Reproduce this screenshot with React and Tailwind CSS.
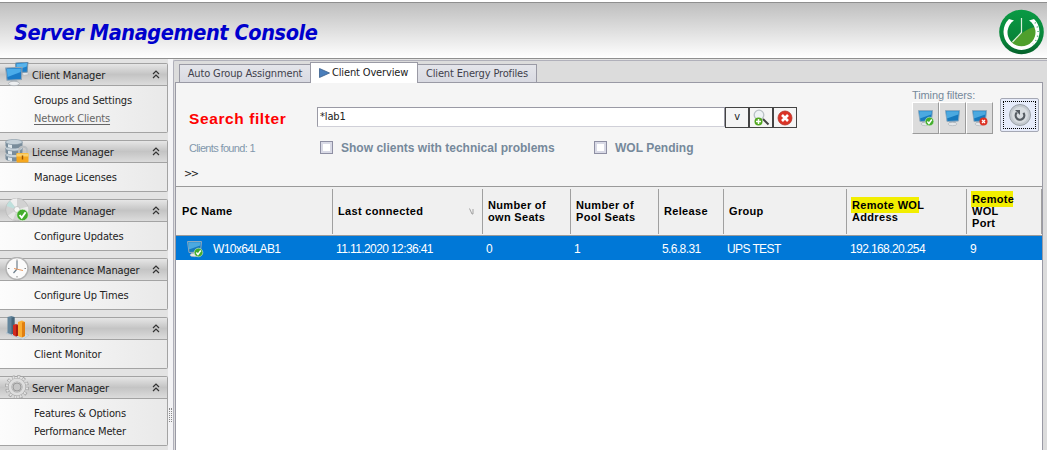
import React from 'react';

/* Sidebar icons */

function NetworkIcon() {
  return (
    <svg width="26" height="26" viewBox="0 0 26 26" className="block">
      <path d="M17 10l5-1 1.500 3.500-5 1z" fill="#e3e6e9" stroke="#aab0b5" strokeWidth=".5" />
      <path d="M10.500 1L23 0l-.8 10.200-11.200.3z" fill="#1c7fca" stroke="#7c93a5" strokeWidth=".9" />
      <path d="M11.500 1.900L22 1l-.3 3.500L11.500 8z" fill="#58b4ec" />
      <path d="M6 18h6l1 2.500H5z" fill="#b5babf" />
      <ellipse cx="9" cy="21.500" rx="5.500" ry="2.200" fill="#eceef0" stroke="#a5abb0" strokeWidth=".7" />
      <path d="M.7 6L17 5.300l-.6 12.200L2 18.200z" fill="#1a7bc8" stroke="#8fa3b3" strokeWidth="1.100" />
      <path d="M1.900 7l14-.6-.2 3.600L2.500 15z" fill="#4aacea" />
    </svg>
  );
}

function DatabaseIcon() {
  return (
    <svg width="26" height="26" viewBox="0 0 26 26" className="block">
      {[17.5, 11, 4.5].map((y) => (
        <g key={y}>
          <path d={`M.5 ${y - 1.5}v3.500c0 4 17 4 17 0v-3.500z`} fill="#788c9b" />
          <path d={`M3 ${y + 0.5}v3.300l4 1v-3.500z`} fill="#dfe7ec" />
          <ellipse cx="9" cy={y - 1.5} rx="8.500" ry="2.600" fill="#c5d1d9" stroke="#8597a4" strokeWidth=".6" />
        </g>
      ))}
      <path d="M14 15v-3.500c0-5 8-5 8 0V15" fill="none" stroke="#b9bdc0" strokeWidth="1.800" />
      <rect x="11.500" y="14" width="12" height="9.500" rx="1" fill="#f6a71d" />
      <path d="M11.500 14.500h12v3h-12z" fill="#fbd06b" />
      <path d="M17.500 16.500v4" stroke="#9a5200" strokeWidth="1.400" />
    </svg>
  );
}

function Check({ cx, cy, r }) {
  return (
    <g transform={`translate(${cx} ${cy}) scale(${r / 6})`}>
      <circle r="6" fill="#43ad2c" stroke="#d9edd4" strokeWidth=".8" />
      <path d="M-3 0l2.2 2.8L3.2-2.8" fill="none" stroke="#fff" strokeWidth="2" />
    </g>
  );
}

function DiscIcon() {
  return (
    <svg width="26" height="26" viewBox="0 0 26 26" className="block">
      <circle cx="12" cy="11.500" r="11.300" fill="#d2d2d2" stroke="#b4b4b4" strokeWidth=".6" />
      <path d="M12 11.500L5 2.800A11 11 0 0 1 12 .5z" fill="#efefef" />
      <path d="M12 11.500L1.500 8A11 11 0 0 1 5 2.800z" fill="#bfe0dd" />
      <path d="M12 11.500l11-3a11 11 0 0 1 0 6z" fill="#ececec" />
      <path d="M12 11.500l-9 6a11 11 0 0 0 5 4.300z" fill="#e6e6e6" />
      <circle cx="12" cy="11.500" r="3" fill="#f6f6f6" stroke="#b0b0b0" strokeWidth=".6" />
      <Check cx={17.5} cy={17} r={5.8} />
    </svg>
  );
}

function ClockIcon() {
  return (
    <svg width="26" height="26" viewBox="0 0 26 26" className="block">
      <circle cx="12" cy="11.500" r="11" fill="#fbfbfb" stroke="#b3b3b3" strokeWidth="1.400" />
      <path d="M12 2.500v1.500M12 19v1.500M3 11.500h1.500M19.500 11.500H21" stroke="#888" strokeWidth="1" />
      <path d="M12 12V4M12 12l-3.500 4" stroke="#6e7f8c" strokeWidth="1.200" fill="none" />
      <path d="M9 11.500l9 2" stroke="#ea9a63" strokeWidth="1" />
    </svg>
  );
}

function ChartIcon() {
  return (
    <svg width="26" height="26" viewBox="0 0 26 26" className="block">
      <path d="M1 17l6-4 17 6-6 4.500z" fill="#cddbe6" stroke="#a9bccb" strokeWidth=".5" />
      <path d="M2.500 1l4-1 3 1v16l-3 1.500-4-1.500z" fill="#63859c" />
      <path d="M6.500 1.500l3-.5v16l-3 1.500z" fill="#456579" />
      <path d="M8 9l3-1 3 1v10l-3 1.500-3-1.500z" fill="#d42a1d" />
      <path d="M11 9.500l3-.5v10l-3 1.500z" fill="#a51b12" />
      <path d="M13 6l4-1.500L20 6v14l-3.500 1.500L13 20z" fill="#fbae33" />
      <path d="M17 6.500l3-.5v14l-3 1.500z" fill="#e07f10" />
    </svg>
  );
}

function GearIcon() {
  return (
    <svg width="26" height="26" viewBox="0 0 26 26" className="block">
      <circle cx="12" cy="12" r="10.300" fill="none" stroke="#a2a2a2" strokeWidth="3.400" strokeDasharray="2.900 2.493" />
      <circle cx="12" cy="12" r="10" fill="none" stroke="#e2e2e2" strokeWidth="2.400" strokeDasharray="1.900 3.336" strokeDashoffset="-.5" />
      <circle cx="12" cy="12" r="7" fill="#cfcfcf" stroke="#a8a8a8" strokeWidth="4" />
      <circle cx="12" cy="12" r="7" fill="none" stroke="#dedede" strokeWidth="2.800" />
      <circle cx="12" cy="12" r="4" fill="#c6c6c6" stroke="#949494" strokeWidth=".9" />
    </svg>
  );
}

const menu = [
  {
    title: 'Client Manager',
    icon: NetworkIcon,
    items: [
      { label: 'Groups and Settings' },
      { label: 'Network Clients', active: true },
    ],
  },
  { title: 'License Manager', icon: DatabaseIcon, items: [{ label: 'Manage Licenses' }] },
  { title: 'Update  Manager', icon: DiscIcon, items: [{ label: 'Configure Updates' }] },
  { title: 'Maintenance Manager', icon: ClockIcon, items: [{ label: 'Configure Up Times' }] },
  { title: 'Monitoring', icon: ChartIcon, items: [{ label: 'Client Monitor' }] },
  {
    title: 'Server Manager',
    icon: GearIcon,
    items: [{ label: 'Features & Options' }, { label: 'Performance Meter' }],
  },
];

function MenuGroup({ title, icon: Icon, items }) {
  return (
    <section className="w-[168px] shrink-0 rounded-r-xs border border-l-0 border-[#a3a3a3] bg-linear-to-r from-[#fcfcfc] to-[#e9e9e9]">
      <div className="flex h-[22px] items-center border-b border-[#a3a3a3] bg-linear-to-b from-[#e6e6e6] via-[#c4c4c4] to-[#dcdcdc] pl-[5px] pr-[7px]">
        <span className="h-[26px] w-[27px] shrink-0">
          <Icon />
        </span>
        <h2 className="flex-1 pt-[4px] whitespace-pre">{title}</h2>
        <svg width="8" height="9" viewBox="0 0 8 9">
          <path d="M1 4l3-3 3 3M1 8l3-3 3 3" fill="none" stroke="#333" strokeWidth="1.200" />
        </svg>
      </div>
      <ul className="pt-[6px] pb-[4px] pl-[34px]">
        {items.map((item) => (
          <li key={item.label} className="flex h-[18px] items-center">
            <a className={item.active ? 'text-[#666] underline underline-offset-2' : ''}>{item.label}</a>
          </li>
        ))}
      </ul>
    </section>
  );
}

function Logo() {
  return (
    <svg width="45" height="46" viewBox="0 0 45 46" className="block">
      <defs>
        <linearGradient id="disc" x1="0" y1="0" x2="0" y2="1">
          <stop offset="0" stopColor="#0a9a44" />
          <stop offset=".7" stopColor="#078238" />
          <stop offset="1" stopColor="#05602a" />
        </linearGradient>
      </defs>
      <circle cx="22.500" cy="23" r="22.300" fill="url(#disc)" />
      <path d="M12 33C18 30 24 20 36 18a14 14 0 0 1-24 15z" fill="#4f9f2c" />
      <path d="M10 10A18 18 0 1 0 35 10l-5 1.500a14 14 0 1 1-15 0z" fill="#fff" />
      <path d="M36 13.500A16.500 16.500 0 0 1 34 35" fill="none" stroke="#4fae72" strokeWidth="1.400" strokeDasharray="1 3.600" />
      <path d="M22.500 9v14.500l-9 9.500" fill="none" stroke="#dcefdc" strokeWidth="1.200" />
    </svg>
  );
}

function Header() {
  return (
    <header className="flex h-[59px] flex-col bg-white pt-[2px]">
      <div className="flex h-[57px] items-center justify-between border-y border-[#8f8f8f] bg-linear-to-b from-[#bfbfbf] to-white pl-[14px] pr-[3px] pt-[2px]">
        <h1 className="pt-[3px] font-['DejaVu_Sans_Condensed','DejaVu_Sans',sans-serif] text-[21.5px] font-bold italic tracking-[-0.4px] text-[#0000cd]">
          Server Management Console
        </h1>
        <Logo />
      </div>
    </header>
  );
}

function StatusMonitor({ status }) {
  return (
    <svg width="18" height="18" viewBox="0 0 18 18" className="block">
      <path d="M6 11h5l1 3.500H5z" fill="#aab1b7" />
      <ellipse cx="8.500" cy="15" rx="4.500" ry="1.700" fill="#e4e7ea" stroke="#a8aeb4" strokeWidth=".6" />
      <path d="M1.500 1.500h14l-1 10.500-11.500.5z" fill="#1679bd" stroke="#8fa9bd" strokeWidth="1" />
      <path d="M2.300 2.200h12.400l-.4 3.300L2.900 9.500z" fill="#4ba9e0" />
      {status === 'ok' && <Check cx={12.5} cy={12.5} r={4.3} />}
      {status === 'error' && (
        <g>
          <circle cx="12.500" cy="12.500" r="4" fill="#dd3324" />
          <path d="M11 11l3 3m0-3l-3 3" stroke="#fff" strokeWidth="1.300" />
        </g>
      )}
    </svg>
  );
}

function Tabs() {
  return (
    <div className="flex h-[21px] items-end bg-[#dcdcdc] pl-[4px]">
      <div className="flex h-[18px] w-[131px] items-center justify-center border border-b-0 border-r-0 border-[#9a9aa5] bg-linear-to-b from-[#e4e5ea] to-[#d9dae2] pt-px text-[#3f3f4c]">
        Auto Group Assignment
      </div>
      <div className="relative -mb-px flex h-[21px] w-[108px] items-center gap-[2px] border border-b-0 border-[#9a9aa5] bg-white pl-[8px]">
        <svg width="11" height="10" viewBox="0 0 11 10" className="shrink-0">
          <path d="M.5.5l10 4.500-10 4.500z" fill="#4a7ebb" stroke="#385d8a" strokeWidth=".8" />
        </svg>
        <span className="pt-px">Client Overview</span>
      </div>
      <div className="flex h-[18px] w-[119px] items-center justify-center border border-b-0 border-l-0 border-[#9a9aa5] bg-linear-to-b from-[#e4e5ea] to-[#d9dae2] pt-px text-[#3f3f4c]">
        Client Energy Profiles
      </div>
    </div>
  );
}

function FilterCheckbox({ label, className = '' }) {
  return (
    <label
      className={`flex items-center gap-[8px] whitespace-nowrap font-['Liberation_Sans',sans-serif] text-[12px] font-bold tracking-[0.01px] text-[#76899b] ${className}`}
    >
      <span className="size-[13px] border border-[#8e8fa3] bg-white ring-2 ring-inset ring-[#d9dae6]" />
      {label}
    </label>
  );
}

function TimingButton({ status }) {
  return (
    <button className="flex h-[32px] w-[27px] items-center justify-center border border-[#9b9b9b] border-t-white border-l-white bg-[#dcdcdc]">
      <StatusMonitor status={status} />
    </button>
  );
}

function SearchPanel() {
  return (
    <div className="flex h-[103px] justify-between bg-[#f5f5f5]">
      <div className="flex flex-col pt-[24px]">
        <div className="flex h-[21px] items-start">
          <h2 className="w-[141px] pl-[13px] font-['Liberation_Sans',sans-serif] text-[15.5px] leading-[23px] font-bold tracking-[0.6px] text-[#ff0000]">
            Search filter
          </h2>
          <div className="flex h-[20px] w-[408px] items-center border border-[#9a9aa5] border-b-[#d0d0d8] bg-white pt-px pl-[2px]">
            *lab1
          </div>
          <button className="flex h-[21px] w-[24px] items-center justify-center border border-[#444]">v</button>
          <button className="flex h-[21px] w-[24px] items-center justify-center border border-[#444]">
            <svg width="18" height="18" viewBox="0 0 18 18">
              <circle cx="7" cy="6" r="4.800" fill="#eef3f5" stroke="#b9c1c5" strokeWidth="1.300" />
              <path d="M11 10l5.500 5.500" stroke="#444" strokeWidth="2" />
              <circle cx="6.500" cy="12.500" r="4" fill="#53a820" />
              <path d="M6.500 10v5M4 12.500h5" stroke="#fff" strokeWidth="1.500" />
            </svg>
          </button>
          <button className="flex h-[21px] w-[24px] items-center justify-center border border-[#444]">
            <svg width="16" height="16" viewBox="0 0 16 16">
              <circle cx="8" cy="8" r="7" fill="#db3326" stroke="#b3342a" strokeWidth=".8" />
              <path d="M5 5l6 6m0-6l-6 6" stroke="#fff" strokeWidth="2.600" />
            </svg>
          </button>
        </div>
        <div className="mt-[9px] flex h-[21px] items-center">
          <span className="w-[144px] pl-[13px] pt-px font-['Liberation_Sans',sans-serif] text-[11px] tracking-[-0.65px] text-[#8298ac]">
            Clients found: 1
          </span>
          <FilterCheckbox label="Show clients with technical problems" className="w-[274px]" />
          <FilterCheckbox label="WOL Pending" />
        </div>
        <div className="mt-[8px] pl-[8px] leading-[16px] tracking-[-1.5px]">&gt;&gt;</div>
      </div>
      <div className="flex gap-[7px] pt-[5px] pr-[3px]">
        <div>
          <div className="h-[14px] whitespace-nowrap font-['Liberation_Sans',sans-serif] text-[11px] leading-[15px] tracking-[-0.12px] text-[#76899b]">
            Timing filters:
          </div>
          <div className="flex">
            <TimingButton status="ok" />
            <TimingButton />
            <TimingButton status="error" />
          </div>
        </div>
        <button className="mt-[10px] flex h-[34px] w-[39px] items-center justify-center rounded-xs border border-[#a5a8b4] bg-[#e6ebfa] p-[2px]">
          <span className="flex size-full items-center justify-center border border-dotted border-black">
            <svg width="24" height="24" viewBox="0 0 24 24">
              <circle cx="12" cy="12" r="10.500" fill="#c4c9cf" stroke="#9ba1a8" />
              <circle cx="12" cy="12" r="8" fill="#d8dce0" />
              <path d="M8.800 9.500a4.300 4.300 0 1 0 6.600.3" fill="none" stroke="#555b62" strokeWidth="2.200" />
              <path d="M7 7h5v5z" fill="#555b62" />
            </svg>
          </span>
        </button>
      </div>
    </div>
  );
}

const columns = [
  { lines: ['PC Name'], value: 'W10x64LAB1', width: 'w-[157px]' },
  { lines: ['Last connected'], value: '11.11.2020 12:36:41', width: 'w-[150px]', sorted: true },
  { lines: ['Number of', 'own Seats'], value: '0', width: 'w-[88px]' },
  { lines: ['Number of', 'Pool Seats'], value: '1', width: 'w-[88px]' },
  { lines: ['Release'], value: '5.6.8.31', width: 'w-[65px]' },
  { lines: ['Group'], value: 'UPS TEST', width: 'w-[123px]' },
  { lines: ['Remote WOL', 'Address'], value: '192.168.20.254', width: 'w-[120px]', mark: 'w-[68px]' },
  { lines: ['Remote', 'WOL', 'Port'], value: '9', width: 'w-[75px]', mark: 'w-[42px]' },
];

function ClientTable() {
  return (
    <div className="flex flex-1 flex-col bg-white font-['Liberation_Sans',sans-serif]">
      <div className="flex h-[50px] border-y border-[#9a9a9a] bg-[#f0f0f0] pt-[2px] pb-px text-[11px] font-bold leading-[12px] text-black">
        {columns.map((col) => (
          <div
            key={col.lines.join(' ')}
            className={`flex shrink-0 items-center justify-between border-r border-[#a0a0a0] pl-[5px] first:pl-[6px] ${col.width}`}
          >
            <div className="relative -mt-px tracking-[0.32px]">
              {col.mark && (
                <span className={`absolute -top-[2px] -left-[1px] h-[16px] bg-[#f2ee00] ${col.mark}`} />
              )}
              {col.lines.map((line) => (
                <div key={line} className="relative whitespace-nowrap">
                  {line}
                </div>
              ))}
            </div>
            {col.sorted && (
              <svg width="5" height="7" viewBox="0 0 5 7" className="mr-[8px]">
                <path d="M.5.5L3 6h1V1" fill="none" stroke="#999" strokeWidth=".9" />
              </svg>
            )}
          </div>
        ))}
      </div>
      <div className="flex h-[24px] items-center bg-[#0078d7] text-[12px] tracking-[-0.6px] text-white">
        {columns.map((col, i) => (
          <div
            key={col.value}
            className={`flex shrink-0 items-center gap-[9px] pt-px whitespace-nowrap ${i === 0 ? 'pl-[10px]' : 'pl-[3px]'} ${col.width}`}
          >
            {i === 0 && <StatusMonitor status="ok" />}
            {col.value}
          </div>
        ))}
      </div>
    </div>
  );
}

export default function App() {
  return (
    <div className="flex h-[450px] w-[1047px] flex-col overflow-hidden bg-[#e3e3e3] font-['DejaVu_Sans_Condensed','DejaVu_Sans',sans-serif] text-[11px] tracking-[-0.15px] text-[#222]">
      <Header />
      <div className="flex min-h-0 flex-1">
        <nav className="flex w-[168px] shrink-0 flex-col gap-[7px] pt-[4px]">
          {menu.map((group) => (
            <MenuGroup key={group.title} {...group} />
          ))}
        </nav>
        {/* Splitter handle */}
        <div className="flex w-[5px] shrink-0 flex-col items-center bg-[#f3f3f5] pt-[349px]">
          <span className="h-[14px] w-[3px] border-x border-dotted border-[#888]" />
        </div>
        <main className="mt-px flex flex-1 flex-col rounded-tl-xs border-t border-l border-[#b0b0ba] bg-[#dcdcdc] pl-px">
          <Tabs />
          <div className="mr-[4px] flex flex-1 flex-col border border-b-0 border-[#9a9aa5]">
            <SearchPanel />
            <ClientTable />
          </div>
        </main>
      </div>
    </div>
  );
}
